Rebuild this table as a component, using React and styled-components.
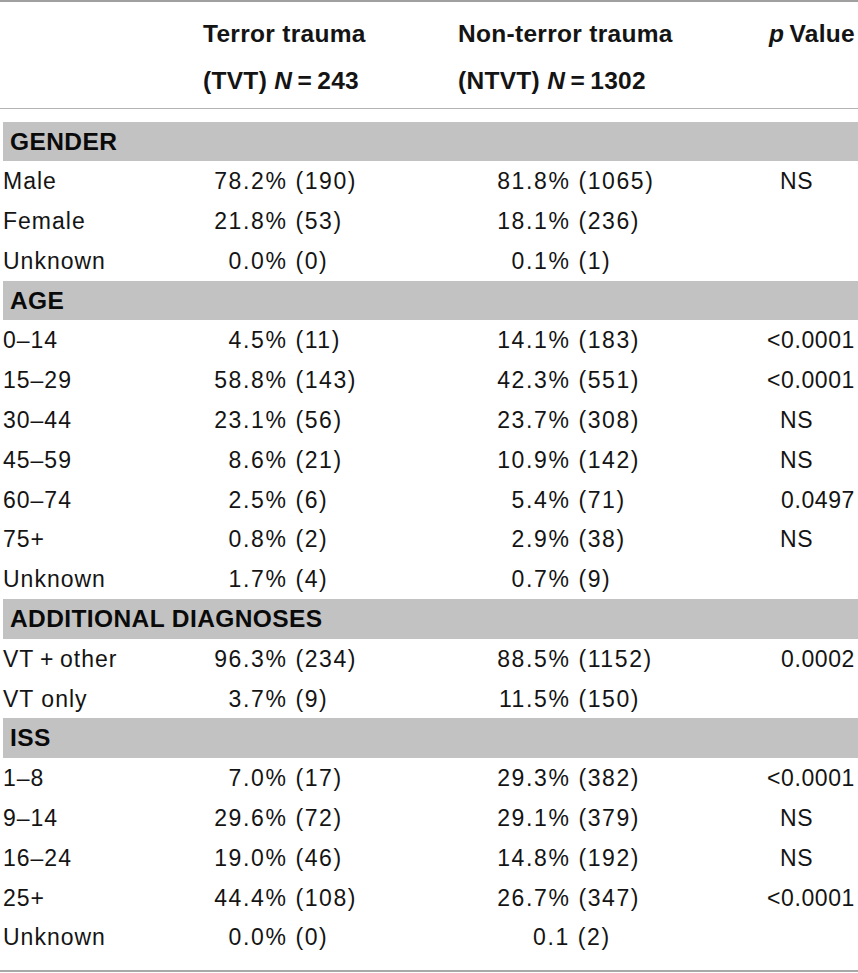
import React from 'react';
import styled, { createGlobalStyle } from 'styled-components';

const Global = createGlobalStyle`
  body {
    margin: 0;
    background: #fff;
  }
`;

const Table = styled.div`
  width: 858px;
  font-family: "Liberation Sans", Arial, sans-serif;
  color: #141414;
  border-top: 2px solid #a0a0a0;
  border-bottom: 2px solid #a8a8a8;
`;

const Cols = `
  display: grid;
  grid-template-columns: 195px 255px 285px 1fr;
`;

const HeadRow = styled.div`
  ${Cols}
  height: 107px;
  padding-top: 8px;
  box-sizing: border-box;
  border-bottom: 1.5px solid #b4b4b4;
`;

const HeadCell = styled.div`
  font-weight: bold;
  font-size: 24.5px;
  line-height: 47px;
  letter-spacing: 0.3px;
  padding-left: ${p => p.$pl || 0}px;
  padding-right: ${p => p.$pr || 0}px;
  text-align: ${p => p.$align || 'left'};
  white-space: nowrap;
`;

const Body = styled.div`
  padding: 12.5px 0 13px;
`;

const SectionBar = styled.div`
  margin-left: 3px;
  height: 39.8px;
  line-height: 40.5px;
  background: #c2c2c2;
  padding-left: 7px;
  font-weight: bold;
  font-size: 24.5px;
  letter-spacing: 0.4px;
  color: #0a0a0a;
`;

const Row = styled.div`
  ${Cols}
  height: 39.8px;
  line-height: 41px;
  font-size: 23px;
`;

const Label = styled.div`
  padding-left: 3px;
  letter-spacing: 1px;
  white-space: nowrap;
`;

const Value = styled.div`
  padding-left: ${p => p.$pl}px;
  letter-spacing: 1.6px;
  white-space: nowrap;
`;

const IntPart = styled.span`
  display: inline-block;
  width: 29px;
  text-align: right;
`;

const PCell = styled.div`
  text-align: ${p => (p.$ns ? 'center' : 'right')};
  padding-right: ${p => (p.$ns ? 0 : 3)}px;
  letter-spacing: 0.6px;
  white-space: nowrap;
`;

const sections = [
  {
    title: 'GENDER',
    rows: [
      ['Male', '78.2% (190)', '81.8% (1065)', 'NS'],
      ['Female', '21.8% (53)', '18.1% (236)', ''],
      ['Unknown', '0.0% (0)', '0.1% (1)', ''],
    ],
  },
  {
    title: 'AGE',
    rows: [
      ['0–14', '4.5% (11)', '14.1% (183)', '<0.0001'],
      ['15–29', '58.8% (143)', '42.3% (551)', '<0.0001'],
      ['30–44', '23.1% (56)', '23.7% (308)', 'NS'],
      ['45–59', '8.6% (21)', '10.9% (142)', 'NS'],
      ['60–74', '2.5% (6)', '5.4% (71)', '0.0497'],
      ['75+', '0.8% (2)', '2.9% (38)', 'NS'],
      ['Unknown', '1.7% (4)', '0.7% (9)', ''],
    ],
  },
  {
    title: 'ADDITIONAL DIAGNOSES',
    rows: [
      ['VT\u2009+\u2009other', '96.3% (234)', '88.5% (1152)', '0.0002'],
      ['VT only', '3.7% (9)', '11.5% (150)', ''],
    ],
  },
  {
    title: 'ISS',
    rows: [
      ['1–8', '7.0% (17)', '29.3% (382)', '<0.0001'],
      ['9–14', '29.6% (72)', '29.1% (379)', 'NS'],
      ['16–24', '19.0% (46)', '14.8% (192)', 'NS'],
      ['25+', '44.4% (108)', '26.7% (347)', '<0.0001'],
      ['Unknown', '0.0% (0)', '0.1 (2)', ''],
    ],
  },
];

function Num({ text, pl }) {
  // values without a percent sign are not decimal aligned in the source table
  if (text.indexOf('%') < 0) {
    return <Value $pl={pl + 36}>{text}</Value>;
  }
  const dot = text.indexOf('.');
  return (
    <Value $pl={pl}>
      <IntPart>{text.slice(0, dot)}</IntPart>
      {text.slice(dot)}
    </Value>
  );
}

export default function App() {
  return (
    <>
      <Global />
      <Table>
        <HeadRow>
          <div />
          <HeadCell $pl={8}>
            Terror trauma
            <br />
            (TVT) <i>N</i>{'\u2009=\u2009'}243
          </HeadCell>
          <HeadCell $pl={8}>
            Non-terror trauma
            <br />
            (NTVT) <i>N</i>{'\u2009=\u2009'}1302
          </HeadCell>
          <HeadCell $align="right" $pr={3}>
            <i>p</i>{'\u2009'}Value
          </HeadCell>
        </HeadRow>
        <Body>
          {sections.map(s => (
            <React.Fragment key={s.title}>
              <SectionBar>{s.title}</SectionBar>
              {s.rows.map((r, i) => (
                <Row key={i}>
                  <Label>{r[0]}</Label>
                  <Num text={r[1]} pl={19} />
                  <Num text={r[2]} pl={47} />
                  <PCell $ns={r[3] === 'NS'}>{r[3]}</PCell>
                </Row>
              ))}
            </React.Fragment>
          ))}
        </Body>
      </Table>
    </>
  );
}
